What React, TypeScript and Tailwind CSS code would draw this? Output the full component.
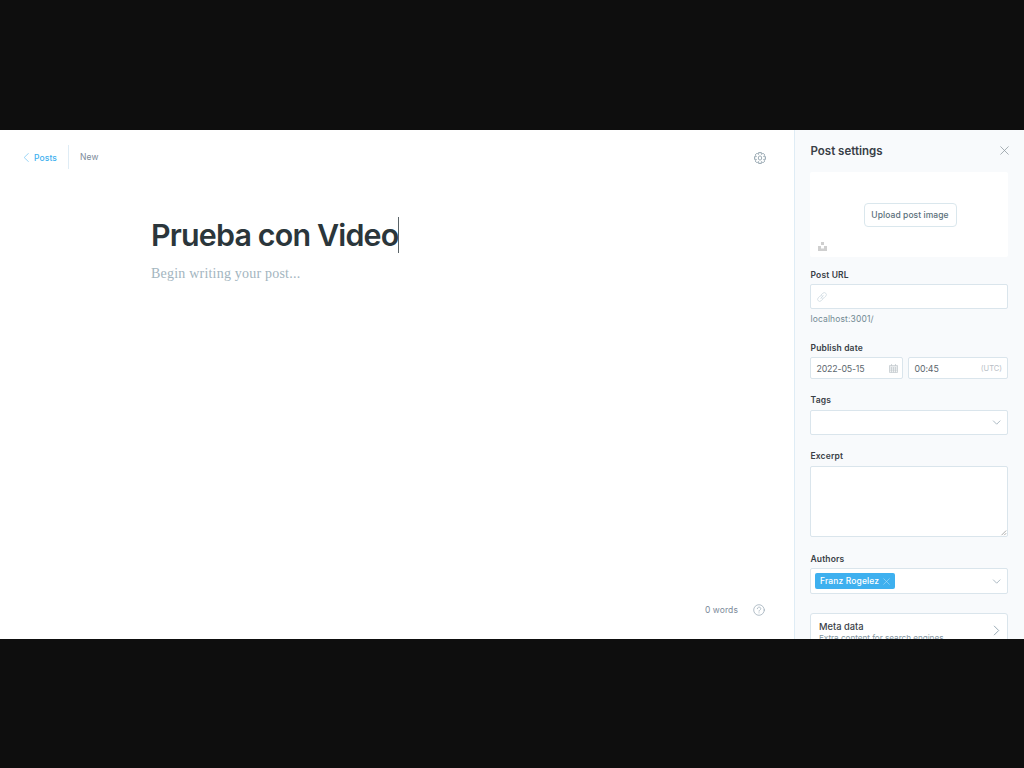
import type { ReactNode } from 'react';

function Chevron({ className, d }: { className: string; d: string }) {
  return (
    <svg className={className} viewBox="0 0 10 10" fill="none" stroke="currentColor" strokeWidth=".85" strokeLinecap="round" strokeLinejoin="round">
      <path d={d} />
    </svg>
  );
}

function Gear() {
  const teeth = Array.from({ length: 8 }, (_, i) => {
    const a = (i * Math.PI) / 4;
    const p = (r: number, o: number) => `${(6 + r * Math.sin(a + o)).toFixed(2)} ${(6 - r * Math.cos(a + o)).toFixed(2)}`;
    return `${i === 0 ? 'M' : 'L'}${p(4.1, -0.3)}L${p(5.7, -0.24)}L${p(5.7, 0.24)}L${p(4.1, 0.3)}`;
  }).join('');
  return (
    <svg className="mt-px size-3 text-[#7d919e]" viewBox="0 0 12 12" fill="none" stroke="currentColor" strokeWidth=".75" strokeLinejoin="round">
      <path d={teeth + 'Z'} />
      <ellipse cx="6" cy="6" rx="1.7" ry="2.1" />
    </svg>
  );
}

function Label({ children }: { children: ReactNode }) {
  return <div className="h-3 text-[8.5px] leading-3 font-semibold tracking-[0.15px] text-[#394047]">{children}</div>;
}

const box = 'flex items-center rounded-[2px] border border-[#dae5ec] bg-white';

export default function App() {
  return (
    <div className="flex h-[768px] w-[1024px] flex-col overflow-hidden bg-[#0e0e0e] pt-[130px] font-['Inter',sans-serif]">
      <div className="flex h-[509px] shrink-0 overflow-hidden bg-white">
        <main className="flex w-[794px] shrink-0 flex-col">
          <header className="flex h-[54px] items-center pr-7 pl-[22px] text-[8.5px] leading-3 tracking-[0.1px]">
            <Chevron className="mr-[3px] size-[9px] text-[#7cc8f3]" d="M7.2 .4 2.4 5l4.8 4.6" />
            <span className="pt-px font-medium text-[#3eb0ef]">Posts</span>
            <span className="mx-[11px] h-6 w-px bg-[#dfecf5]" />
            <span className="grow text-[#7c8b9a]">New</span>
            <Gear />
          </header>
          <section className="grow pt-[32px] pl-[151px]">
            <h1 className="flex h-[38px] items-center text-[30.4px] leading-[38px] font-semibold tracking-[-0.82px] whitespace-nowrap text-[#2b363b]">
              <span>Prueba con Video</span>
              <span className="h-9 w-px bg-[#5b6468]" />
            </h1>
            <p className="mt-[10px] h-5 font-['Liberation_Serif',serif] text-[14px] leading-5 tracking-[0.21px] text-[#a3b5c0]">Begin writing your post...</p>
          </section>
          <footer className="mb-[23px] flex h-3 items-center justify-end pr-[29px] text-[8.5px] leading-3 tracking-[0.1px] text-[#7c8b9a]">
            <span>0 words</span>
            <svg className="ml-[15px] size-3 text-[#93a5b1]" viewBox="0 0 12 12" fill="none" stroke="currentColor" strokeWidth=".7" strokeLinecap="round">
              <circle cx="6" cy="6" r="5.3" />
              <path d="M4.3 4.7c0-2.2 3.5-2.1 3.5 0C7.8 6 6 5.8 6 7.2M6 8.8v.1" />
            </svg>
          </footer>
        </main>
        <aside className="w-[230px] shrink-0 border-l border-[#dfecf5] bg-[#f8fafc] pr-4 pl-[15px]">
          <div className="flex h-[42px] items-center justify-between">
            <h2 className="pl-[0.5px] text-[11.5px] leading-4 font-semibold text-[#394047]">Post settings</h2>
            <Chevron className="-mt-px -mr-[0.5px] size-[9px] text-[#8e989f]" d="M.8.8l8.4 8.4M9.2.8.8 9.2" />
          </div>
          <div className="relative flex h-[85px] items-center justify-center rounded-[2px] bg-white">
            <button className="ml-[2px] h-6 w-[93px] rounded-[4px] border border-[#dae7ed] text-[8.5px] leading-[22px] font-medium tracking-[0.07px] whitespace-nowrap text-[#5a6f7a]">Upload post image</button>
            <svg className="absolute bottom-[6px] left-[8px] size-[9px]" viewBox="0 0 9 9" fill="#cfcfcf">
              <path d="M3 0h3v3H3zM0 4h3v2.5h3V4h3v5H0z" />
            </svg>
          </div>
          <div className="mt-3 pl-[0.5px]"><Label>Post URL</Label></div>
          <div className={`${box} mt-[3px] h-[25px] pl-[6px]`}>
            <svg className="size-[10px] text-[#cbd7df]" viewBox="0 0 24 24" fill="none" stroke="currentColor" strokeWidth="1.8" strokeLinecap="round">
              <path d="M9 15 15 9M10 7l4-4a4.9 4.9 0 0 1 7 7l-4 4a4.9 4.9 0 0 1-6 .7M14 17l-4 4a4.9 4.9 0 0 1-7-7l4-4a4.9 4.9 0 0 1 6-.7" />
            </svg>
          </div>
          <p className="mt-1 h-3 pl-[0.5px] text-[8.5px] leading-3 tracking-[0.13px] text-[#738a94]">localhost:3001/</p>
          <div className="mt-[17px] pl-[0.5px]"><Label>Publish date</Label></div>
          <div className="mt-[3px] flex gap-[5px] text-[8.8px] leading-3 text-[#5b666d]">
            <div className={`${box} h-[22px] w-[93px] justify-between pr-[4.5px] pl-[5.5px]`}>
              <span className="pt-px tracking-[-0.16px]">2022-05-15</span>
              <svg className="size-[9px]" viewBox="0 0 9 9" fill="none" stroke="#c0c7cb" strokeWidth=".7">
                <path d="M.5 1.5h8v7h-8zM2.5 0v2M6.5 0v2M.5 3h8M.5 5h8M.5 6.8h8M2.5 3v5.5M4.5 3v5.5M6.5 3v5.5" />
              </svg>
            </div>
            <div className={`${box} h-[22px] grow justify-between pr-[5px] pl-[5.5px]`}>
              <span className="pt-px tracking-[-0.1px]">00:45</span>
              <span className="pt-px text-[7.5px] text-[#b8c0c6]">(UTC)</span>
            </div>
          </div>
          <div className="mt-[15px] pl-[0.5px]"><Label>Tags</Label></div>
          <div className={`${box} mt-1 h-[25px] justify-end pr-[6px]`}>
            <Chevron className="size-[9px] text-[#93a5b1]" d="M1.5 3.2l3.7 3.7 3.7-3.7" />
          </div>
          <div className="mt-[15px] pl-[0.5px]"><Label>Excerpt</Label></div>
          <div className={`${box} mt-1 h-[71px] items-end justify-end`}>
            <svg className="size-[7px]" viewBox="0 0 7 7" fill="none" stroke="#888" strokeWidth=".7">
              <path d="M1.5 6.2 6.2 1.5M4.2 6.2l2-2" />
            </svg>
          </div>
          <div className="mt-4 pl-[0.5px]"><Label>Authors</Label></div>
          <div className={`${box} mt-[3px] h-[26px] justify-between pr-[6px] pl-1`}>
            <span className="flex h-4 w-20 items-center justify-between rounded-[2px] bg-[#3eb0ef] pr-[5px] pl-[5px] text-[8.5px] leading-4 font-medium tracking-[0.13px] whitespace-nowrap text-white">
              Franz Rogelez
              <Chevron className="size-[7px] text-[#b2dff9]" d="M1 1l8 8M9 1 1 9" />
            </span>
            <Chevron className="size-[9px] text-[#93a5b1]" d="M1.5 3.2l3.7 3.7 3.7-3.7" />
          </div>
          <div className="mt-[19px] flex h-9 items-center justify-between rounded-[3px] border border-[#dae5ec] bg-white pr-[5px] pl-2">
            <div className="pt-px">
              <div className="text-[9.3px] leading-3 font-medium text-[#394047]">Meta data</div>
              <div className="text-[8.2px] leading-[10px] tracking-[-0.05px] text-[#8295a0]">Extra content for search engines</div>
            </div>
            <Chevron className="-mt-px size-[11px] text-[#93a5b1]" d="M3 1l4 4-4 4" />
          </div>
        </aside>
      </div>
    </div>
  );
}
